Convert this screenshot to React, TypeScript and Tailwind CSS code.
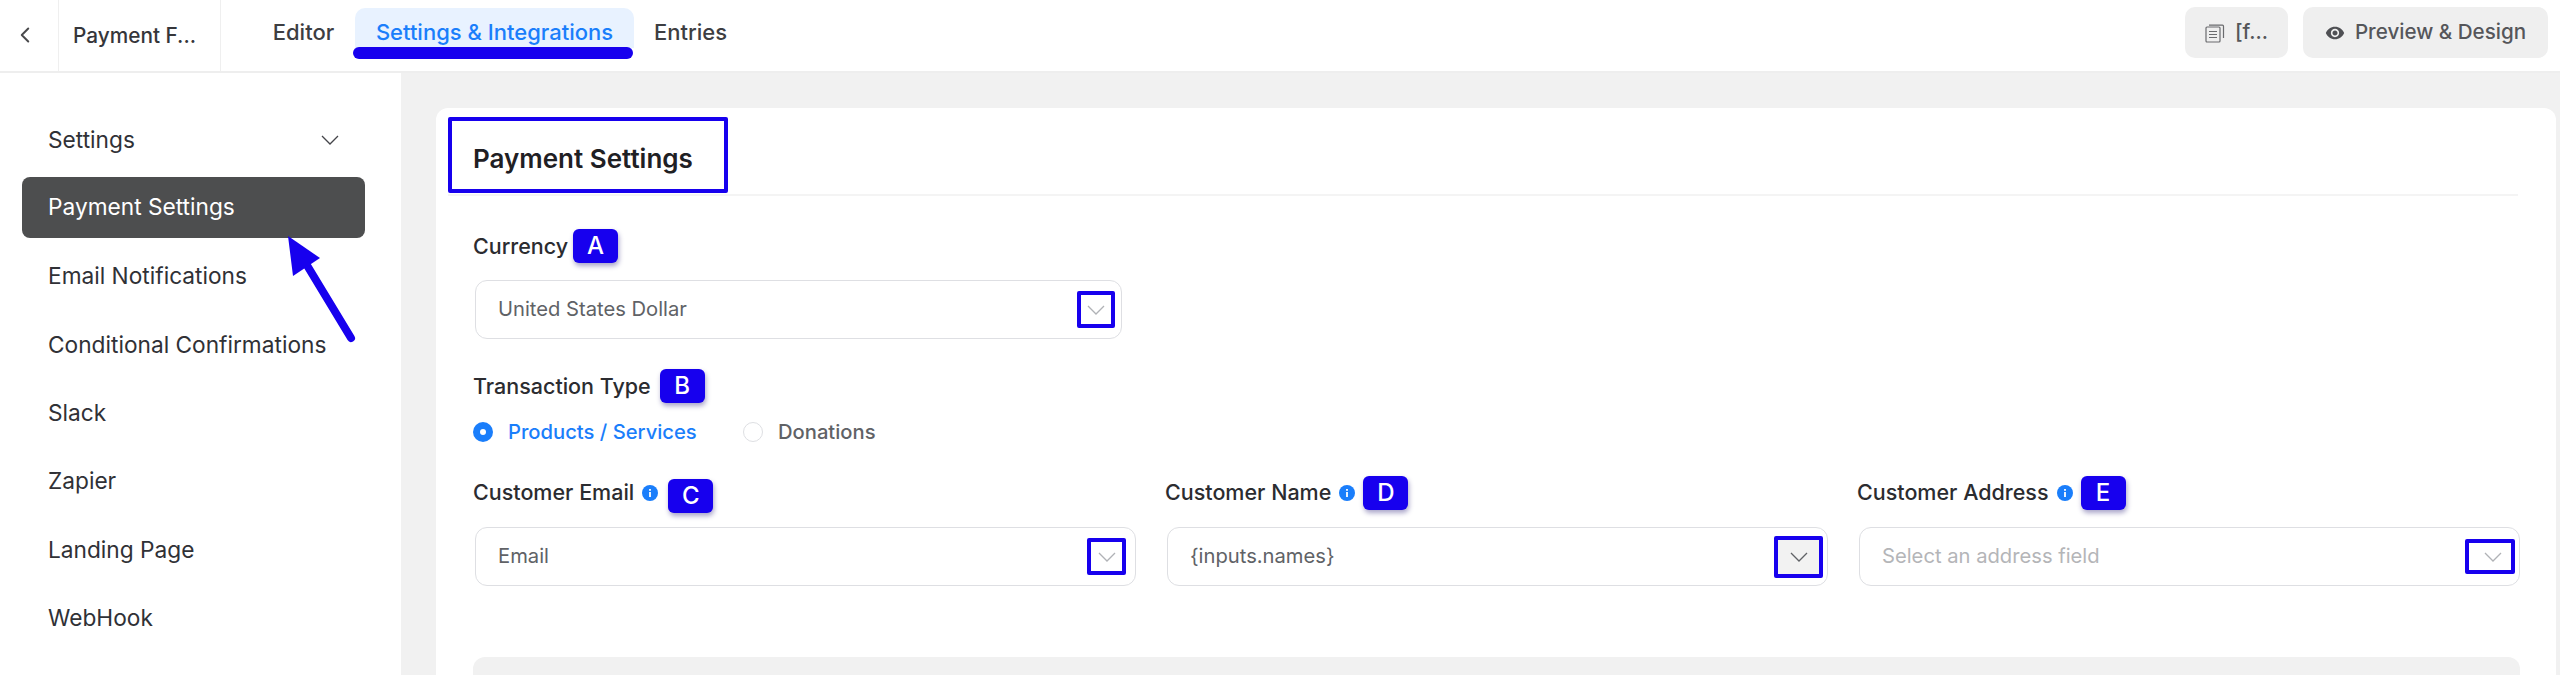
import { ChevronLeft } from "lucide-react";
import { MdRemoveRedEye } from "react-icons/md";

const sideItems = [
  "Email Notifications",
  "Conditional Confirmations",
  "Slack",
  "Zapier",
  "Landing Page",
  "WebHook",
];

const Chevron = ({ className }: { className: string }) => (
  <svg viewBox="0 0 18 10" className={`h-[10px] w-[18px] shrink-0 ${className}`} fill="none" stroke="currentColor" strokeWidth="1.3">
    <polyline points="1,1 9,9 17,1" />
  </svg>
);

const Badge = ({ letter, className }: { letter: string; className: string }) => (
  <span
    className={`flex h-[34px] w-[45px] items-center justify-center rounded-[6px] bg-[#1700ee] text-[24px] font-medium text-white shadow-[1px_3px_5px_rgba(40,30,120,0.4)] ${className}`}
  >
    {letter}
  </span>
);

const InfoDot = () => (
  <svg viewBox="0 0 16 16" className="ml-[8px] h-[16px] w-[16px]">
    <circle cx="8" cy="8" r="8" fill="#1a7efb" />
    <rect x="7.1" y="7" width="1.8" height="5" fill="#fff" />
    <rect x="7.1" y="4" width="1.8" height="1.8" fill="#fff" />
  </svg>
);

const SelectBox = ({
  value,
  className,
  textClass,
  markClass,
  chevronClass,
}: {
  value: string;
  className: string;
  textClass: string;
  markClass: string;
  chevronClass: string;
}) => (
  <div
    className={`ml-[2px] flex h-[59px] items-center justify-between rounded-[12px] border border-[#dedfe3] pl-[22px] text-[20.2px] ${className}`}
  >
    <span className={textClass}>{value}</span>
    <span
      className={`flex items-center justify-center rounded-[2px] border-[4px] border-[#1700ee] ${markClass}`}
    >
      <Chevron className={chevronClass} />
    </span>
  </div>
);

const App = () => {
  return (
    <div className="relative h-[675px] w-[2560px] overflow-hidden bg-white font-['Inter',sans-serif]">
      {/* TOP BAR */}
      <header className="flex h-[73px] border-b-2 border-[#eeeeee]">
        <div className="flex w-[59px] items-center justify-center border-r border-[#efefef] pr-[8px] pb-[2px]">
          <ChevronLeft size={26} strokeWidth={1.8} className="text-[#4a4a4c]" />
        </div>
        <div className="flex w-[162px] items-center border-r border-[#efefef] pl-[14px] text-[20.8px] font-medium text-[#35363a]">
          Payment F...
        </div>
        <nav className="ml-[31px] flex text-[22px] font-medium text-[#3d3e42]">
          <div className="flex h-[64px] w-[103px] items-center justify-center">
            Editor
          </div>
          <div className="relative mt-[8px] flex h-[40px] w-[279px] items-center justify-center rounded-t-[10px] bg-[#e8f2ff] pt-[8px] text-[#1a7efb]">
            Settings &amp; Integrations
            <span className="absolute top-[39px] left-[-2px] h-[12px] w-[280px] rounded-full bg-[#1700ee]" />
          </div>
          <div className="flex h-[64px] w-[113px] items-center justify-center">
            Entries
          </div>
        </nav>
        <div className="ml-auto flex items-start gap-[15px] pt-[7px] pr-[12px] text-[20.6px] font-medium text-[#55565a]">
          <button className="flex h-[51px] w-[103px] items-center justify-center gap-[10px] rounded-[10px] bg-[#efefef]">
            <svg viewBox="0 0 20 20" className="h-[20px] w-[20px]" fill="none" stroke="#6a6b6e" strokeWidth="1.2">
              <rect x="1" y="4" width="14" height="15" rx="1" />
              <path d="M4 2.2h13.5a1 1 0 0 1 1 1V15" />
              <path d="M4 8.5h8M4 11.5h8M4 14.5h8" />
            </svg>
            [f...
          </button>
          <button className="flex h-[51px] w-[245px] items-center justify-center gap-[10px] rounded-[10px] bg-[#efefef]">
            <MdRemoveRedEye size={20} className="text-[#4f5054]" />
            Preview &amp; Design
          </button>
        </div>
      </header>

      <div className="flex h-[602px]">
        {/* SIDEBAR */}
        <aside className="w-[401px] px-[22px] pt-[33px] text-[22.7px] font-normal text-[#303136]">
          <div className="flex h-[71px] items-center justify-between pr-[40px] pb-[3px] pl-[26px]">
            Settings
            <Chevron className="text-[#44454a]" />
          </div>
          <div className="flex h-[61px] w-[343px] items-center rounded-[8px] bg-[#4d4e4f] pl-[26px] text-white">
            Payment Settings
          </div>
          <div className="pt-[4px]">
            {sideItems.map((item) => (
              <div key={item} className="flex h-[68.4px] items-center pl-[26px]">
                {item}
              </div>
            ))}
          </div>
        </aside>

        {/* CONTENT */}
        <main className="flex-1 bg-[#f1f1f1] pt-[35px] pr-[4px] pl-[35px]">
          <div className="h-full rounded-t-[12px] bg-white">
            <div className="relative mr-[38px] ml-[12px] flex h-[88px] items-center border-b-2 border-[#f4f4f4] pt-[14px] pl-[25px]">
              <h2 className="text-[26px] font-semibold text-[#1f2024]">Payment Settings</h2>
              <span className="absolute top-[9px] left-0 h-[76px] w-[280px] rounded-[2px] border-[4px] border-[#1700ee]" />
            </div>

            <div className="pr-[36px] pl-[37px]">
              <div className="mt-[33px] flex h-[34px] items-center text-[21.5px] font-medium text-[#2b2c30]">
                Currency
                <Badge letter="A" className="ml-[5px]" />
              </div>
              <SelectBox
                value="United States Dollar"
                className="mt-[17px] w-[647px] pr-[6px]"
                textClass="text-[#606266]"
                markClass="h-[37px] w-[38px]"
                chevronClass="text-[#b0b2b6]"
              />

              <div className="mt-[30px] flex h-[34px] items-center text-[21.5px] font-medium text-[#2b2c30]">
                Transaction Type
                <Badge letter="B" className="ml-[9px]" />
              </div>
              <div className="mt-[19px] flex h-[20px] items-center text-[20.2px] font-medium">
                <span className="flex h-[20px] w-[20px] items-center justify-center rounded-full bg-[#1a7efb]">
                  <span className="h-[6px] w-[6px] rounded-full bg-white" />
                </span>
                <span className="ml-[15px] w-[235px] text-[#1a7efb]">Products / Services</span>
                <span className="h-[20px] w-[20px] rounded-full border border-[#dedfe3]" />
                <span className="ml-[15px] text-[#606266]">Donations</span>
              </div>

              <div className="mt-[33px] grid grid-cols-3 gap-[29px]">
                <div>
                  <div className="flex h-[35px] items-center text-[21.5px] font-medium text-[#2b2c30]">
                    Customer Email
                    <InfoDot />
                    <Badge letter="C" className="mt-[6px] ml-[10px]" />
                  </div>
                  <SelectBox
                    value="Email"
                    className="mt-[17px] pr-[9px]"
                    textClass="text-[#606266]"
                    markClass="h-[37px] w-[39px]"
                    chevronClass="text-[#b0b2b6]"
                  />
                </div>
                <div>
                  <div className="flex h-[35px] items-center text-[21.5px] font-medium text-[#2b2c30]">
                    Customer Name
                    <InfoDot />
                    <Badge letter="D" className="ml-[8px]" />
                  </div>
                  <SelectBox
                    value="{inputs.names}"
                    className="mt-[17px] pr-[4px]"
                    textClass="text-[#606266]"
                    markClass="h-[42px] w-[49px] bg-[#f2f2f2]"
                    chevronClass="text-[#606266]"
                  />
                </div>
                <div>
                  <div className="flex h-[35px] items-center text-[21.5px] font-medium text-[#2b2c30]">
                    Customer Address
                    <InfoDot />
                    <Badge letter="E" className="ml-[8px]" />
                  </div>
                  <SelectBox
                    value="Select an address field"
                    className="mt-[17px] pr-[4px]"
                    textClass="text-[#b4b5b8]"
                    markClass="h-[35px] w-[50px] pl-[6px]"
                    chevronClass="text-[#b0b2b6]"
                  />
                </div>
              </div>

              <div className="mt-[71px] h-[40px] rounded-t-[12px] bg-[#f1f1f1]" />
            </div>
          </div>
        </main>
      </div>

      {/* ANNOTATION ARROW */}
      <svg className="absolute top-0 left-0 h-[675px] w-[401px]" viewBox="0 0 401 675">
        <polygon points="288,236 320,258 293,276" fill="#1700ee" />
        <line x1="305" y1="262" x2="351" y2="338" stroke="#1700ee" strokeWidth="8" strokeLinecap="round" />
      </svg>
    </div>
  );
};

export default App;
